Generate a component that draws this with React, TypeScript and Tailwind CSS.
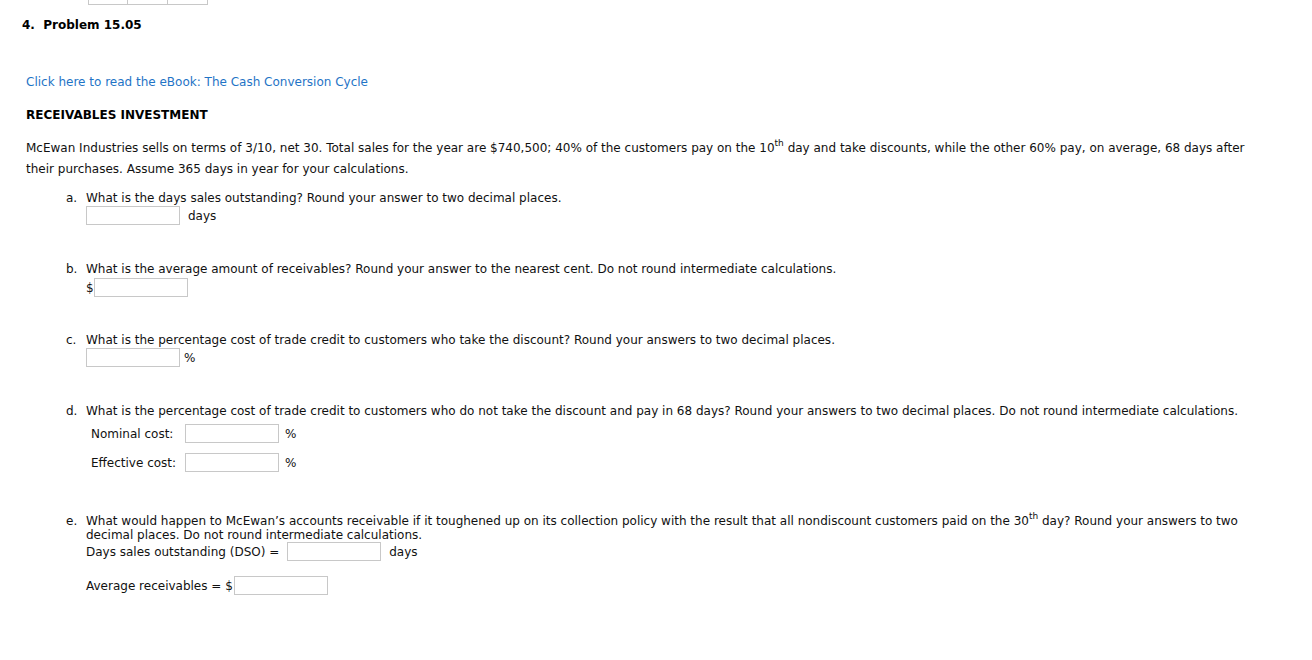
const font = "font-['DejaVu_Sans','Verdana',sans-serif]";

function Box({ className = "" }: { className?: string }) {
  return <input type="text" className={`block h-[19px] w-[94px] border border-[#c8c8c8] bg-white outline-none ${className}`} />;
}

function Th() {
  return <span className="relative top-[-6px] text-[9px] leading-none">th</span>;
}

function Question({ letter, children }: { letter: string; children: React.ReactNode }) {
  return (
    <div className="flex text-[12px] leading-[14px] text-[#111]">
      <span className="w-[20px] shrink-0">{letter}</span>
      <span>{children}</span>
    </div>
  );
}

export default function App() {
  return (
    <div className={`h-[660px] w-[1312px] overflow-hidden bg-white text-[#111] ${font}`}>
      <div className="ml-[88px] flex">
        <div className="h-[5px] w-[40px] border border-t-0 border-[#c8c8c8]" />
        <div className="h-[5px] w-[40px] border border-l-0 border-t-0 border-[#c8c8c8]" />
        <div className="h-[5px] w-[40px] border border-l-0 border-t-0 border-[#c8c8c8]" />
      </div>

      <div className="ml-[22px] mt-[13px] text-[12px] font-bold leading-[14px] text-black">
        4.&nbsp; Problem 15.05
      </div>

      <div className="ml-[26px] mt-[43px] text-[12px] leading-[14px]">
        <a className="text-[#1f74c6]" href="#">Click here to read the eBook: The Cash Conversion Cycle</a>
      </div>

      <div className="ml-[26px] mt-[19px] text-[12px] font-bold leading-[14px] text-black">RECEIVABLES INVESTMENT</div>

      <p className="ml-[26px] mr-[40px] mt-[16px] text-[12px] leading-[21px]">
        McEwan Industries sells on terms of 3/10, net 30. Total sales for the year are $740,500; 40% of the customers pay on the 10
        <Th /> day and take discounts, while the other 60% pay, on average, 68 days after their purchases. Assume 365 days in year for your calculations.
      </p>

      <div className="ml-[66px] mr-[40px]">
        <div className="mt-[11px]">
          <Question letter="a.">What is the days sales outstanding? Round your answer to two decimal places.</Question>
          <div className="ml-[20px] mt-[1px] flex items-center gap-[8px] text-[12px]">
            <Box />
            <span>days</span>
          </div>
        </div>

        <div className="mt-[37px]">
          <Question letter="b.">What is the average amount of receivables? Round your answer to the nearest cent. Do not round intermediate calculations.</Question>
          <div className="ml-[20px] mt-[2px] flex items-center text-[12px]">
            <span className="w-[8px]">$</span>
            <Box />
          </div>
        </div>

        <div className="mt-[36px]">
          <Question letter="c.">What is the percentage cost of trade credit to customers who take the discount? Round your answers to two decimal places.</Question>
          <div className="ml-[20px] mt-[1px] flex items-center gap-[4px] text-[12px]">
            <Box />
            <span>%</span>
          </div>
        </div>

        <div className="mt-[37px]">
          <Question letter="d.">What is the percentage cost of trade credit to customers who do not take the discount and pay in 68 days? Round your answers to two decimal places. Do not round intermediate calculations.</Question>
          <div className="ml-[25px] mt-[6px] flex flex-col gap-[10px] text-[12px]">
            <div className="flex items-center">
              <span className="w-[94px]">Nominal cost:</span>
              <Box />
              <span className="ml-[6px]">%</span>
            </div>
            <div className="flex items-center">
              <span className="w-[94px]">Effective cost:</span>
              <Box />
              <span className="ml-[6px]">%</span>
            </div>
          </div>
        </div>

        <div className="mt-[42px]">
          <Question letter="e.">
            What would happen to McEwan’s accounts receivable if it toughened up on its collection policy with the result that all nondiscount customers paid on the 30
            <Th /> day? Round your answers to two decimal places. Do not round intermediate calculations.
          </Question>
          <div className="ml-[20px] mt-0 flex items-center text-[12px]">
            <span className="mr-[8px]">Days sales outstanding (DSO) =</span>
            <Box />
            <span className="ml-[8px]">days</span>
          </div>
          <div className="ml-[20px] mt-[15px] flex items-center text-[12px]">
            <span className="mr-[1px]">Average receivables = $</span>
            <Box />
          </div>
        </div>
      </div>
    </div>
  );
}
